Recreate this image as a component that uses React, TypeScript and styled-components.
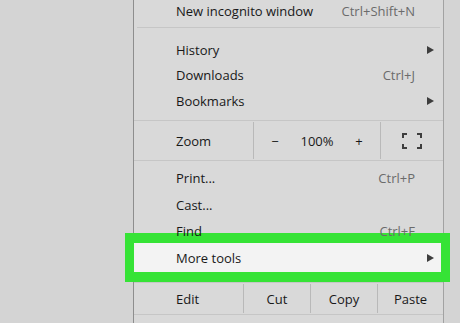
import React from "react";
import styled, { createGlobalStyle, css } from "styled-components";

const Global = createGlobalStyle`
  html, body { margin: 0; padding: 0; }
  body {
    width: 460px;
    height: 323px;
    overflow: hidden;
    background: #d4d4d4;
    font-family: "Open Sans", "Noto Sans", "Liberation Sans", sans-serif;
  }
`;

const Page = styled.div`
  width: 460px;
  height: 323px;
  overflow: hidden;
  background: #d4d4d4;
`;

const Menu = styled.div`
  box-sizing: border-box;
  margin-left: 133px;
  width: 311px;
  height: 323px;
  background: #d9d9d9;
  border-left: 1px solid #8e8e8e;
  border-right: 1px solid #a2a2a2;
  display: flex;
  flex-direction: column;
`;

const Row = styled.div<{ $h?: number; $arrow?: boolean; $first?: boolean; $highlight?: boolean }>`
  position: relative;
  flex: none;
  height: ${(p) => p.$h ?? 26}px;
  margin-top: ${(p) => (p.$first ? -2 : 0)}px;
  display: flex;
  align-items: center;
  justify-content: space-between;
  padding: 0 ${(p) => (p.$arrow ? 8 : 28)}px 0 42px;
  font-size: 13px;
  color: #181818;
  ${(p) =>
    p.$highlight &&
    css`
      &::before {
        content: "";
        position: absolute;
        left: -9px;
        right: -7px;
        top: -11.5px;
        bottom: -11px;
        border: 9px solid #36e336;
        border-top-width: 10px;
        border-bottom-width: 10px;
        background: #f3f3f3;
        z-index: 0;
      }
    `}
`;

const Label = styled.span`
  position: relative;
  z-index: 1;
  white-space: nowrap;
`;

const Shortcut = styled.span`
  position: relative;
  z-index: 1;
  color: #6b6b6b;
  white-space: nowrap;
`;

const Arrow = styled.span`
  position: relative;
  z-index: 1;
  width: 0;
  height: 0;
  border-top: 4.5px solid transparent;
  border-bottom: 4.5px solid transparent;
  border-left: 7px solid #3d3d3d;
  margin-right: 1px;
`;

const Sep = styled.div<{ $top: number; $bottom: number }>`
  flex: none;
  height: 1px;
  margin: ${(p) => p.$top}px 3px ${(p) => p.$bottom}px 3px;
  background: #c6c6c6;
`;

const SplitRow = styled.div<{ $h: number; $mt: number; $mb: number }>`
  box-sizing: border-box;
  flex: none;
  height: ${(p) => p.$h}px;
  margin-top: ${(p) => p.$mt}px;
  margin-bottom: ${(p) => p.$mb}px;
  border-top: 1px solid #c6c6c6;
  border-bottom: 1px solid #c6c6c6;
  display: flex;
  align-items: stretch;
  font-size: 13px;
  color: #181818;
`;

const Cell = styled.div<{ $w: number; $divider?: boolean; $left?: boolean }>`
  box-sizing: border-box;
  flex: none;
  width: ${(p) => p.$w}px;
  display: flex;
  align-items: center;
  justify-content: ${(p) => (p.$left ? "flex-start" : "center")};
  padding-left: ${(p) => (p.$left ? 42 : 0)}px;
  margin: 1px 0;
  border-left: ${(p) => (p.$divider ? "1px solid #b9b9b9" : "none")};
  white-space: nowrap;
`;

const ZoomControls = styled.div`
  box-sizing: border-box;
  flex: none;
  width: 127px;
  margin: 1px 0;
  border-left: 1px solid #b9b9b9;
  display: grid;
  grid-template-columns: 1fr 1fr 1fr;
  align-items: center;
  justify-items: center;
`;

const Ctrl = styled.span`
  font-size: 13px;
`;

const Fullscreen = () => (
  <svg width="20" height="16" viewBox="0 0 20 16" fill="none" stroke="#3e3e3e" strokeWidth="2">
    <path d="M1 5V1h4" />
    <path d="M15 1h4v4" />
    <path d="M19 11v4h-4" />
    <path d="M5 15H1v-4" />
  </svg>
);

export default function App() {
  return (
    <Page>
      <Global />
      <Menu>
        <Row $first>
          <Label>New incognito window</Label>
          <Shortcut>Ctrl+Shift+N</Shortcut>
        </Row>
        <Sep $top={3} $bottom={9} />
        <Row $arrow $h={25.5}>
          <Label>History</Label>
          <Arrow />
        </Row>
        <Row $h={25.5}>
          <Label>Downloads</Label>
          <Shortcut>Ctrl+J</Shortcut>
        </Row>
        <Row $arrow $h={25.5}>
          <Label>Bookmarks</Label>
          <Arrow />
        </Row>
        <SplitRow $h={41} $mt={6.5} $mb={4}>
          <Cell $w={119} $left>
            Zoom
          </Cell>
          <ZoomControls>
            <Ctrl>−</Ctrl>
            <Ctrl>100%</Ctrl>
            <Ctrl>+</Ctrl>
          </ZoomControls>
          <Cell $w={63} $divider>
            <Fullscreen />
          </Cell>
        </SplitRow>
        <Row $h={26.5}>
          <Label>Print...</Label>
          <Shortcut>Ctrl+P</Shortcut>
        </Row>
        <Row $h={26.5}>
          <Label>Cast...</Label>
        </Row>
        <Row $h={26.5}>
          <Label>Find</Label>
          <Shortcut>Ctrl+F</Shortcut>
        </Row>
        <Row $h={26.5} $arrow $highlight>
          <Label>More tools</Label>
          <Arrow />
        </Row>
        <SplitRow $h={33} $mt={11} $mb={0}>
          <Cell $w={109} $left>
            Edit
          </Cell>
          <Cell $w={67} $divider>
            Cut
          </Cell>
          <Cell $w={67} $divider>
            Copy
          </Cell>
          <Cell $w={66} $divider>
            Paste
          </Cell>
        </SplitRow>
      </Menu>
    </Page>
  );
}
